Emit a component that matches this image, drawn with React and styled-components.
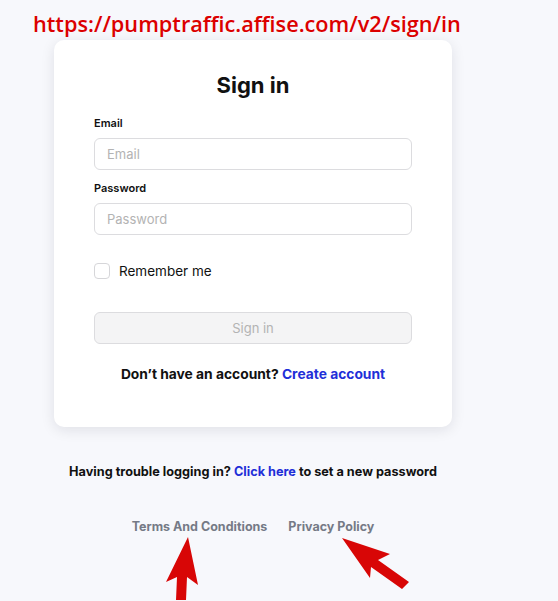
import React from "react";
import styled, { createGlobalStyle } from "styled-components";

const Global = createGlobalStyle`
  html, body { margin: 0; padding: 0; background: #f7f8fc; }
  body { font-family: Inter, "Noto Sans", sans-serif; color: #111; }
  * { box-sizing: border-box; }
`;

const Page = styled.div`
  position: relative;
  width: 558px;
  height: 601px;
  overflow: hidden;
  background: #f7f8fc;
`;

const Column = styled.div`
  width: 506px;
  padding-top: 40px;
  display: flex;
  flex-direction: column;
  align-items: center;
`;

const Card = styled.form`
  width: 398px;
  background: #fff;
  border-radius: 10px;
  box-shadow: 0 3px 14px rgba(20, 24, 40, 0.1);
  padding: 32px 40px 45px;
  display: flex;
  flex-direction: column;
`;

const Title = styled.h1`
  margin: 0 0 18px;
  font-size: 22px;
  line-height: 26px;
  font-weight: 700;
  text-align: center;
  color: #111;
`;

const Label = styled.label`
  font-size: 11px;
  line-height: 14px;
  font-weight: 600;
  color: #111;
  margin-bottom: 8px;
`;

const Input = styled.input`
  width: 100%;
  height: 32px;
  border: 1px solid #dcdcdf;
  border-radius: 6px;
  padding: 0 12px;
  font-family: inherit;
  font-size: 13px;
  color: #222;
  margin-bottom: ${(p) => p.$mb || 0}px;
  outline: none;
  &::placeholder { color: #b3b3b3; }
`;

const CheckRow = styled.label`
  display: flex;
  align-items: center;
  gap: 9px;
  margin-top: 28px;
  font-size: 13.5px;
  color: #111;
`;

const Box = styled.span`
  width: 16px;
  height: 16px;
  border: 1px solid #d6d6d9;
  border-radius: 4px;
  background: #fff;
`;

const Button = styled.button`
  margin-top: 33px;
  height: 32px;
  width: 100%;
  border: 1px solid #dcdcdf;
  border-radius: 6px;
  background: #f4f4f5;
  color: #b3b3b3;
  font-family: inherit;
  font-size: 13px;
`;

const Prompt = styled.p`
  margin: 22px 0 0;
  text-align: center;
  font-size: 13.8px;
  line-height: 16px;
  font-weight: 700;
  color: #111;
`;

const Link = styled.a`
  color: ${(p) => p.$muted ? "#757a86" : "#1f2fd8"};
  text-decoration: none;
  font-weight: 700;
`;

const Trouble = styled.p`
  margin: 37px 0 0;
  font-size: 12.7px;
  line-height: 16px;
  font-weight: 700;
  color: #111;
`;

const Footer = styled.nav`
  margin-top: 39px;
  display: flex;
  gap: 21px;
  font-size: 12.5px;
  line-height: 16px;
`;

const Url = styled.div`
  position: absolute;
  left: 33px;
  top: 9px;
  font-family: "Open Sans", "Noto Sans", sans-serif;
  font-size: 21.7px;
  font-weight: 600;
  line-height: 30px;
  color: #dc0000;
`;

const Arrows = styled.svg`
  position: absolute;
  left: 0;
  top: 0;
  pointer-events: none;
`;

export default function App() {
  return (
    <Page>
      <Global />
      <Column>
        <Card onSubmit={(e) => e.preventDefault()}>
          <Title>Sign in</Title>
          <Label>Email</Label>
          <Input placeholder="Email" $mb={11} />
          <Label>Password</Label>
          <Input placeholder="Password" type="password" />
          <CheckRow>
            <Box />
            Remember me
          </CheckRow>
          <Button disabled>Sign in</Button>
          <Prompt>
            Don’t have an account? <Link href="#">Create account</Link>
          </Prompt>
        </Card>
        <Trouble>
          Having trouble logging in? <Link href="#">Click here</Link> to set a new password
        </Trouble>
        <Footer>
          <Link $muted href="#">Terms And Conditions</Link>
          <Link $muted href="#">Privacy Policy</Link>
        </Footer>
      </Column>
      <Url>https://pumptraffic.affise.com/v2/sign/in</Url>
      <Arrows width="558" height="601" viewBox="0 0 558 601">
        <polygon fill="#d80606" points="188,537 198,585 187,577 186,600 176,600 177,577 166,582" />
        <polygon fill="#d80606" points="342,538 390,554 378,560 409,582 402,589 371,567 370,578" />
      </Arrows>
    </Page>
  );
}
